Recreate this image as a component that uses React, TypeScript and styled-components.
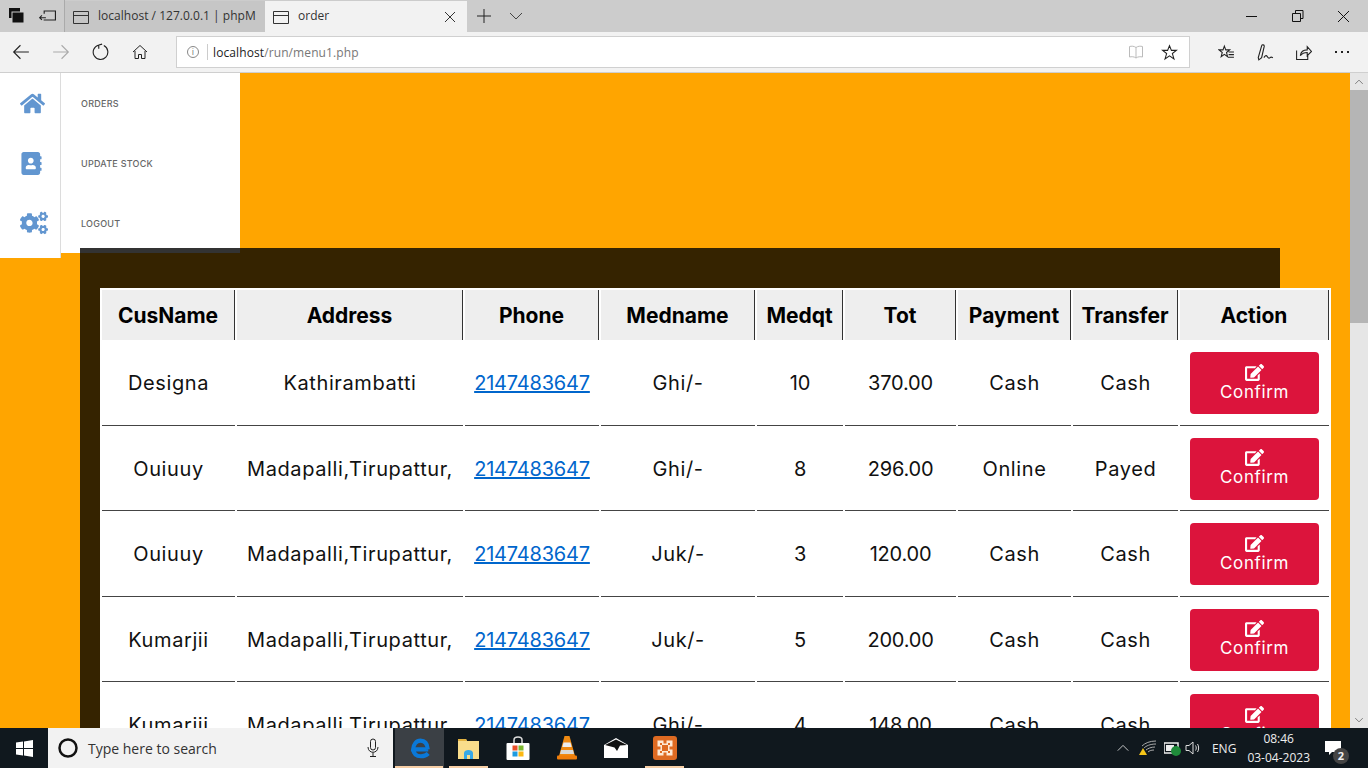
import styled, { createGlobalStyle } from 'styled-components'
import { FaHome, FaAddressBook, FaCogs, FaEdit } from 'react-icons/fa'

const orders = [
  { name: 'Designa', address: 'Kathirambatti', med: 'Ghi/-', qty: 10, total: '370.00', payment: 'Cash', transfer: 'Cash' },
  { name: 'Ouiuuy', address: 'Madapalli,Tirupattur,', med: 'Ghi/-', qty: 8, total: '296.00', payment: 'Online', transfer: 'Payed' },
  { name: 'Ouiuuy', address: 'Madapalli,Tirupattur,', med: 'Juk/-', qty: 3, total: '120.00', payment: 'Cash', transfer: 'Cash' },
  { name: 'Kumarjii', address: 'Madapalli,Tirupattur,', med: 'Juk/-', qty: 5, total: '200.00', payment: 'Cash', transfer: 'Cash' },
  { name: 'Kumarjii', address: 'Madapalli,Tirupattur,', med: 'Ghi/-', qty: 4, total: '148.00', payment: 'Cash', transfer: 'Cash' },
]

const columns = [
  { title: 'CusName', width: 133 },
  { title: 'Address', width: 226 },
  { title: 'Phone', width: 134 },
  { title: 'Medname', width: 154 },
  { title: 'Medqt', width: 86 },
  { title: 'Tot', width: 111 },
  { title: 'Payment', width: 113 },
  { title: 'Transfer', width: 105 },
  { title: 'Action', width: 149 },
]

const Line = ({ d, size = 16, color = '#222', w = 1 }: { d: string; size?: number; color?: string; w?: number }) => (
  <svg width={size} height={size} viewBox="0 0 16 16" fill="none" stroke={color} strokeWidth={w}>
    <path d={d} />
  </svg>
)

export default function App() {
  return (
    <Screen>
      <GlobalStyle />
      <TitleBar>
        <TabTools>
          <svg width="16" height="16" viewBox="0 0 16 16" fill="#111">
            <rect x="0" y="0" width="11" height="10" />
            <rect x="3" y="4" width="12" height="11" stroke="#ccc" />
          </svg>
          <Line size={18} d="M7 9.500H1.500M3.500 7.500l-2 2 2 2M5.500 6V3.500h10v8h-10V11" />
        </TabTools>
        <Tab>
          <Line d="M.5 2.500h15v12H.5zM.5 6.500h15" color="#333" />
          <TabLabel>localhost / 127.0.0.1 | phpM</TabLabel>
        </Tab>
        <Tab $active>
          <Line d="M.5 2.500h15v12H.5zM.5 6.500h15" color="#333" />
          <TabLabel>order</TabLabel>
          <TabClose>
            <Line d="M3 3l10 10M13 3 3 13" color="#333" />
          </TabClose>
        </Tab>
        <TabActions>
          <Line size={16} d="M8 1v14M1 8h14" />
          <Line size={16} d="M2 5l6 6 6-6" color="#444" />
        </TabActions>
        <WindowButtons>
          <Line d="M3 8.500h11" color="#111" />
          <Line d="M3.500 5.500h8v8h-8zM6.500 5.500v-3h7.500v8h-2.500" color="#111" />
          <Line d="M3 3l11 11M14 3 3 14" color="#111" />
        </WindowButtons>
      </TitleBar>

      <Toolbar>
        <NavIcons>
          <Line size={18} d="M15 8H1.500M7.500 2l-6 6 6 6" />
          <Line size={18} d="M1 8h13.500M8.500 2l6 6-6 6" color="#aaa" />
          <Line size={18} d="M6 1.800A6.500 6.500 0 1 0 10.500 2.300M6 1.800V5M6 1.800l3-.8" />
          <Line size={16} d="M1 8l7-6.500L15 8M3 7v7.500h3.500v-4h3v4H13V7" />
        </NavIcons>
        <AddressBar>
          <InfoMark>i</InfoMark>
          <AddressDivider />
          <Url>
            <strong>localhost</strong>/run/menu1.php
          </Url>
          <AddressIcons>
            <Line size={16} d="M8 3.500C6 2 3.500 2 1.500 2.500v10.500c2-.5 4.500-.5 6.500 1 2-1.500 4.500-1.500 6.500-1V2.500C12.500 2 10 2 8 3.500zM8 3.500V14" color="#bbb" />
            <Line size={17} d="M8 1.500 9.800 6h4.700l-3.800 3 1.500 5L8 11.200 3.800 14l1.500-5-3.800-3h4.700z" />
          </AddressIcons>
        </AddressBar>
        <NavActions>
          <Line size={17} d="M6 2 7.300 5.500H11L8 8l1 4-3-2.300L3 12l1-4-3-2.500h3.700zM10 7.500h5M10 10h5M9 12.500h6" />
          <Line size={18} d="M2 13 5 2.500c.5-1.500 2.500-1 2.300.5L5 13l-2.500 2zM7 13c1-1.500 2-2.500 3-1s1.500 2 2.500 1 1.500-.5 2.500 0" />
          <Line size={17} d="M1.500 6v8.500H12V10M5 11c.5-3.500 3-5.500 6.500-5.500V2.500l4 4.500-4 4V8C9 8 6.500 9 5 11z" />
          <MoreDots>
            <i />
            <i />
            <i />
          </MoreDots>
        </NavActions>
      </Toolbar>

      <Viewport>
        <Page>
          <Menu>
            <IconRail>
              <RailItem>
                <FaHome size={25} />
              </RailItem>
              <RailItem>
                <FaAddressBook size={23} />
              </RailItem>
              <RailItem>
                <FaCogs size={28} />
              </RailItem>
            </IconRail>
            <MenuPanel>
              <MenuLink>Orders</MenuLink>
              <MenuLink>Update stock</MenuLink>
              <MenuLink>Logout</MenuLink>
              <PanelShade />
            </MenuPanel>
          </Menu>

          <Board>
            <OrdersTable>
              <colgroup>
                {columns.map((c) => (
                  <col key={c.title} style={{ width: c.width }} />
                ))}
              </colgroup>
              <thead>
                <tr>
                  {columns.map((c) => (
                    <Th key={c.title}>{c.title}</Th>
                  ))}
                </tr>
              </thead>
              <tbody>
                {orders.map((o, i) => (
                  <tr key={i}>
                    <Td>{o.name}</Td>
                    <Td>{o.address}</Td>
                    <Td $numeric>
                      <PhoneLink href="#">2147483647</PhoneLink>
                    </Td>
                    <Td>{o.med}</Td>
                    <Td $numeric>{o.qty}</Td>
                    <Td $numeric>{o.total}</Td>
                    <Td>{o.payment}</Td>
                    <Td>{o.transfer}</Td>
                    <Td>
                      <ConfirmButton>
                        <FaEdit size={19} />
                        <span>Confirm</span>
                      </ConfirmButton>
                    </Td>
                  </tr>
                ))}
              </tbody>
            </OrdersTable>
          </Board>
        </Page>
        <Scrollbar>
          <ScrollArrow>
            <Line size={10} d="M2 11l6-6 6 6" color="#777" w={1.500} />
          </ScrollArrow>
          <ScrollThumb />
          <ScrollTrack />
          <ScrollArrow>
            <Line size={10} d="M2 5l6 6 6-6" color="#777" w={1.500} />
          </ScrollArrow>
        </Scrollbar>
      </Viewport>

      <Taskbar>
        <StartButton>
          <svg width="17" height="17" viewBox="0 0 17 17" fill="#fff">
            <path d="M0 2.500 7 1.500v6.500H0zM8 1.400 17 0v8H8zM0 9h7v6.500L0 14.500zM8 9h9v8l-9-1.400z" />
          </svg>
        </StartButton>
        <SearchBox>
          <svg width="22" height="22" viewBox="0 0 22 22" fill="none" stroke="#111" strokeWidth="2.500">
            <circle cx="11" cy="11" r="8.500" />
          </svg>
          <SearchText>Type here to search</SearchText>
          <svg width="14" height="20" viewBox="0 0 14 20" fill="none" stroke="#222" strokeWidth="1">
            <rect x="4.500" y="1" width="5" height="11" rx="2.500" />
            <path d="M2 9c0 7 10 7 10 0M7 14.500V18M4 18.500h6" />
          </svg>
        </SearchBox>
        <AppIcons>
          <AppSlot $active $running>
            <svg width="22" height="22" viewBox="0 0 24 24" fill="none" stroke="#0a78d7" strokeWidth="4.500">
              <path d="M21 13.500H4.500C5 8 8 4 12.500 4s7.500 3 8 9.500M21 18c-2.500 2.500-5 3-8 3-5 0-8-3-8.500-7.500" />
            </svg>
          </AppSlot>
          <AppSlot $running>
            <svg width="23" height="23" viewBox="0 0 23 23">
              <path d="M1 2h8l1 2h12v18H1z" fill="#f9dd8b" />
              <path d="M1 2h8l1 2H1z" fill="#e3b341" />
              <path d="M7 22v-6c0-4 9-4 9 0v6h-3v-4h-3v4z" fill="#38a9e8" />
            </svg>
          </AppSlot>
          <AppSlot>
            <svg width="24" height="25" viewBox="0 0 24 25">
              <path d="M8 8V4c0-4 8-4 8 0v4" fill="none" stroke="#ddd" strokeWidth="1.500" />
              <rect x="0.500" y="7" width="23" height="17" rx="1" fill="#fff" />
              <rect x="6.500" y="9.500" width="5" height="5" fill="#e8502a" />
              <rect x="12.500" y="9.500" width="5" height="5" fill="#7cb82f" />
              <rect x="6.500" y="15.500" width="5" height="5" fill="#1f9be0" />
              <rect x="12.500" y="15.500" width="5" height="5" fill="#fcb813" />
            </svg>
          </AppSlot>
          <AppSlot>
            <svg width="20" height="24" viewBox="0 0 20 24">
              <path d="M7.500 0h5l5.500 20H2z" fill="#f08a12" />
              <path d="M6.500 6.500h7l1.200 4.500H5.300z" fill="#ededed" />
              <path d="M4 14h12l1 4H3z" fill="#d9d9d9" />
              <rect x="0" y="19.500" width="20" height="4" rx="1" fill="#ef7d0b" />
            </svg>
          </AppSlot>
          <AppSlot>
            <svg width="24" height="20" viewBox="0 0 24 20">
              <path d="M0 7 12 0l12 7v13H0z" fill="#fff" />
              <path d="M1 7 12 1.500 23 7l-7 .5-3 5.500-2.500-3.500z" fill="#111" />
            </svg>
          </AppSlot>
          <AppSlot $running>
            <svg width="24" height="24" viewBox="0 0 24 24">
              <rect width="24" height="24" rx="3" fill="#de6a22" />
              <path d="M4.500 4.500h6v3h3v-3h6v6h-3v3h3v6h-6v-3h-3v3h-6v-6h3v-3h-3z" fill="#fde8d4" />
              <path d="M7 7h2v2h6V7h2v2h-2v6h2v2h-2v-2H9v2H7v-2h2V9H7z" fill="#de6a22" />
            </svg>
          </AppSlot>
        </AppIcons>
        <Tray>
          <TrayChevron>
            <Line size={14} d="M2 11l6-6 6 6" color="#ddd" />
          </TrayChevron>
          <svg width="18" height="16" viewBox="0 0 18 16" fill="none" stroke="#aaa" strokeWidth="1">
            <path d="M5 8c2-2 6-4 12-4M7 10c2-1.500 5-3 9-3M9 12c1-1 3-2 6-2M3 6c3-3 8-5 14-5" />
            <path d="M0 15l4-7 4 7z" fill="#f5c518" stroke="none" />
          </svg>
          <svg width="18" height="16" viewBox="0 0 18 16">
            <rect x="0" y="3" width="14" height="10" fill="none" stroke="#eee" strokeWidth="1.500" />
            <rect x="2" y="5" width="8" height="6" fill="#eee" />
            <circle cx="12" cy="11" r="5" fill="#1f8b3a" />
          </svg>
          <VolumeIcon>
            <svg width="18" height="16" viewBox="0 0 18 16" fill="none" stroke="#ddd" strokeWidth="1">
              <path d="M1 5.500h3l4-3.500v12l-4-3.500H1zM10.500 5.500c1 1.500 1 3.500 0 5M12.500 4c1.500 2 1.500 6 0 8" />
            </svg>
          </VolumeIcon>
          <TrayText>ENG</TrayText>
          <Clock>
            <span>08:46</span>
            <span>03-04-2023</span>
          </Clock>
          <Notification>
            <svg width="18" height="16" viewBox="0 0 18 16" fill="#fff">
              <path d="M1 1h16v11H8l-3 3v-3H1z" />
            </svg>
            <NotificationBadge>2</NotificationBadge>
          </Notification>
        </Tray>
      </Taskbar>
    </Screen>
  )
}

const GlobalStyle = createGlobalStyle`
  html, body {
    margin: 0;
    padding: 0;
    overflow: hidden;
  }
  * {
    box-sizing: border-box;
  }
`

const Screen = styled.div`
  width: 1368px;
  height: 768px;
  display: flex;
  flex-direction: column;
  overflow: hidden;
  font-family: 'Open Sans', 'Noto Sans', sans-serif;
`

const TitleBar = styled.div`
  height: 32px;
  flex: none;
  display: flex;
  background: #cccccc;
`

const TabTools = styled.div`
  width: 65px;
  display: flex;
  align-items: center;
  gap: 13px;
  padding-left: 9px;
  border-right: 1px solid #aaa;
`

const Tab = styled.div<{ $active?: boolean }>`
  width: ${(p) => (p.$active ? '202px' : '200px')};
  display: flex;
  align-items: center;
  gap: 9px;
  padding-left: 8px;
  margin-top: 1px;
  background: ${(p) => (p.$active ? '#f2f2f2' : '#c6c6c6')};
`

const TabLabel = styled.span`
  margin-bottom: 2px;
  font-size: 12px;
  letter-spacing: 0.02px;
  color: #333;
  white-space: nowrap;
`

const TabClose = styled.span`
  display: flex;
  margin-left: auto;
  margin-right: 9px;
`

const TabActions = styled.div`
  display: flex;
  align-items: center;
  gap: 16px;
  padding-left: 9px;
`

const WindowButtons = styled.div`
  margin-left: auto;
  display: flex;
  align-items: center;
  gap: 30px;
  padding-right: 17px;
`

const Toolbar = styled.div`
  height: 41px;
  flex: none;
  display: flex;
  align-items: center;
  background: #f2f2f2;
  border-bottom: 1px solid #cfcfcf;
`

const NavIcons = styled.div`
  width: 176px;
  display: flex;
  align-items: center;
  gap: 22px;
  padding-left: 12px;
`

const AddressBar = styled.div`
  width: 1014px;
  height: 32px;
  display: flex;
  align-items: center;
  background: #fff;
  border: 1px solid #d0d0d0;
`

const InfoMark = styled.span`
  width: 12px;
  height: 12px;
  margin-left: 10px;
  border: 1px solid #888;
  border-radius: 50%;
  font-size: 9px;
  line-height: 10px;
  text-align: center;
  color: #777;
`

const AddressDivider = styled.span`
  width: 1px;
  height: 16px;
  margin: 0 5px 0 8px;
  background: #ccc;
`

const Url = styled.span`
  font-size: 12px;
  letter-spacing: 0.1px;
  color: #777;
  strong {
    font-weight: 400;
    color: #222;
  }
`

const AddressIcons = styled.div`
  margin-left: auto;
  display: flex;
  align-items: center;
  gap: 17px;
  padding-right: 11px;
`

const NavActions = styled.div`
  flex: 1;
  display: flex;
  align-items: center;
  gap: 21px;
  padding-left: 28px;
`

const MoreDots = styled.span`
  display: flex;
  gap: 4px;
  margin-left: 2px;
  i {
    width: 2px;
    height: 2px;
    background: #222;
  }
`

const Viewport = styled.div`
  flex: 1;
  min-height: 0;
  display: flex;
`

const Page = styled.div`
  position: relative;
  flex: 1;
  min-width: 0;
  background: orange;
  padding: 175px 0 0 80px;
  overflow: hidden;
`

const Menu = styled.nav`
  position: absolute;
  top: 0;
  left: 0;
  display: flex;
  align-items: flex-start;
  z-index: 2;
`

const IconRail = styled.div`
  width: 61px;
  height: 185px;
  display: flex;
  flex-direction: column;
  background: #fff;
  border-right: 1px solid #dcdcdc;
`

const RailItem = styled.div`
  height: 60px;
  display: flex;
  align-items: center;
  padding-left: 20px;
  color: #6296d0;
`

const MenuPanel = styled.div`
  position: relative;
  width: 179px;
  height: 180px;
  display: flex;
  flex-direction: column;
  background: #fff;
`

const MenuLink = styled.a`
  height: 60px;
  display: flex;
  align-items: center;
  padding-left: 20px;
  font-family: Inter, sans-serif;
  font-size: 9px;
  font-weight: 500;
  letter-spacing: 0.25px;
  text-transform: uppercase;
  color: #666;
`

const PanelShade = styled.div`
  position: absolute;
  left: 19px;
  right: 0;
  bottom: 0;
  height: 5px;
  background: #333;
`

const Board = styled.section`
  width: 1200px;
  height: 700px;
  padding: 40px 0 0 20px;
  background: #352300;
`

const OrdersTable = styled.table`
  width: 1231px;
  table-layout: fixed;
  border-collapse: separate;
  border-spacing: 2px;
  background: #fff;
  font-family: Inter, sans-serif;
  color: #111;
`

const Th = styled.th`
  height: 50px;
  padding: 0;
  background: #eeeeee;
  border-right: 1px solid #333;
  font-size: 21px;
  font-weight: 700;
  color: #000;
`

const Td = styled.td<{ $numeric?: boolean }>`
  height: 83.5px;
  padding: 0;
  border-bottom: 1px solid #444;
  text-align: center;
  font-size: 20px;
  letter-spacing: ${(p) => (p.$numeric ? '-0.2px' : '0.6px')};
  white-space: nowrap;
`

const PhoneLink = styled.a`
  color: #0066cc;
  text-decoration: underline;
`

const ConfirmButton = styled.button`
  width: 129px;
  height: 62px;
  display: inline-flex;
  flex-direction: column;
  align-items: center;
  justify-content: center;
  padding: 0 0 2px;
  border: none;
  border-radius: 4px;
  background: #dc143c;
  color: #fff;
  font-family: Inter, sans-serif;
  font-size: 17px;
  letter-spacing: 0.6px;
  line-height: 20px;
  vertical-align: middle;
  cursor: pointer;
`

const Scrollbar = styled.div`
  width: 18px;
  flex: none;
  display: flex;
  flex-direction: column;
  background: #e6e6e6;
`

const ScrollArrow = styled.div`
  height: 17px;
  display: flex;
  align-items: center;
  justify-content: center;
`

const ScrollThumb = styled.div`
  height: 233px;
  background: #b5b5b5;
`

const ScrollTrack = styled.div`
  flex: 1;
`

const Taskbar = styled.footer`
  height: 40px;
  flex: none;
  display: flex;
  align-items: center;
  background: #10181e;
`

const StartButton = styled.div`
  width: 48px;
  height: 40px;
  display: flex;
  align-items: center;
  justify-content: center;
`

const SearchBox = styled.div`
  width: 345px;
  height: 40px;
  display: flex;
  align-items: center;
  padding: 0 13px 0 9px;
  background: #f2f2f2;
`

const SearchText = styled.span`
  flex: 1;
  margin-left: 9px;
  font-size: 14px;
  color: #333;
`

const AppIcons = styled.div`
  display: flex;
  height: 40px;
  margin-left: 2px;
`

const AppSlot = styled.div<{ $active?: boolean; $running?: boolean }>`
  position: relative;
  width: 49px;
  height: 40px;
  display: flex;
  align-items: center;
  justify-content: center;
  background: ${(p) => (p.$active ? '#3b4045' : 'transparent')};

  &::after {
    content: '';
    display: ${(p) => (p.$running ? 'block' : 'none')};
    position: absolute;
    left: ${(p) => (p.$active ? '0' : '5px')};
    right: ${(p) => (p.$active ? '1px' : '5px')};
    bottom: 0;
    height: 2px;
    background: #f7cfa6;
  }
`

const Tray = styled.div`
  margin-left: auto;
  display: flex;
  align-items: center;
  gap: 7px;
  padding-right: 24px;
  color: #eee;
`

const TrayChevron = styled.span`
  display: flex;
  margin-right: 2px;
`

const VolumeIcon = styled.span`
  display: flex;
  margin-left: -4px;
`

const TrayText = styled.span`
  margin-left: 2px;
  font-size: 12px;
`

const Clock = styled.div`
  display: flex;
  flex-direction: column;
  align-items: center;
  margin-left: 4px;
  font-size: 12px;
  line-height: 19px;
`

const Notification = styled.div`
  position: relative;
  margin-left: 7px;
  margin-right: 2px;
  display: flex;
`

const NotificationBadge = styled.span`
  position: absolute;
  right: -7px;
  bottom: -8px;
  width: 16px;
  height: 16px;
  border-radius: 50%;
  background: #444;
  font-size: 11px;
  font-weight: 700;
  line-height: 16px;
  text-align: center;
`
